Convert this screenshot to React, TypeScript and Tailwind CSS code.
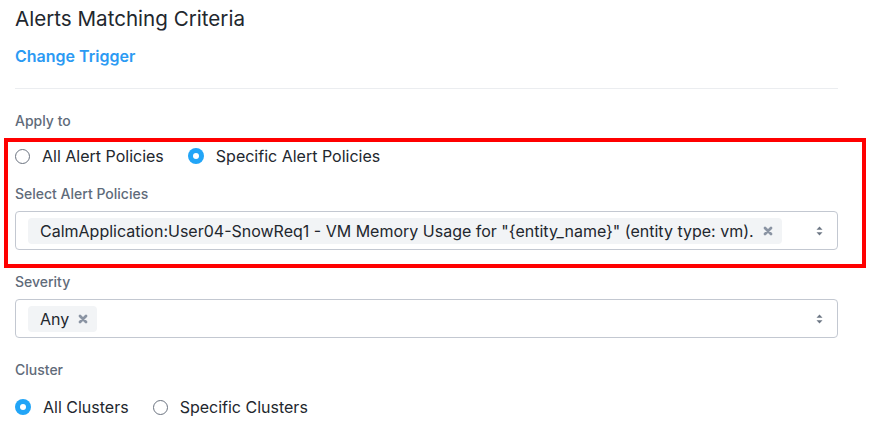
import React from 'react';

const FONT = { fontFamily: 'Inter, "Open Sans", Arial, sans-serif' };

const Radio: React.FC<{ checked?: boolean; label: string }> = ({ checked, label }) => (
  <label className="flex items-center gap-[12px] mr-[24px]">
    {checked ? (
      <span className="w-[16px] h-[16px] rounded-full bg-[#22a5f7] flex items-center justify-center">
        <span className="w-[6px] h-[6px] rounded-full bg-white" />
      </span>
    ) : (
      <span className="w-[15px] h-[15px] rounded-full border-[1.5px] border-[#6b7380] bg-white" />
    )}
    <span className="text-[16px] text-[#22272e]">{label}</span>
  </label>
);

const ChipX = () => (
  <svg width="10" height="10" viewBox="0 0 10 10" className="ml-[9px]">
    <path d="M2 2 L8 8 M8 2 L2 8" stroke="#8a94a3" strokeWidth="2.8" strokeLinecap="round" />
  </svg>
);

const Caret = () => (
  <svg width="7" height="10" viewBox="0 0 7 10">
    <path d="M3.5 0.5 L6.5 3.8 H0.5 Z" fill="#6d7785" />
    <path d="M3.5 9.5 L6.5 6.2 H0.5 Z" fill="#6d7785" />
  </svg>
);

const Select: React.FC<{ chip: string; className?: string }> = ({ chip, className }) => (
  <div className={`h-[39px] w-[823px] border border-[#c3c8d1] rounded-[4px] flex items-center pl-[12px] pr-[14px] bg-white ${className ?? ''}`}>
    <div className="flex-1">
      <span className="inline-flex items-center h-[26px] pl-[12px] pr-[9px] rounded-[4px] bg-[#f2f4f6] text-[16px] text-[#22272e]">
        {chip}
        <ChipX />
      </span>
    </div>
    <Caret />
  </div>
);

const FieldLabel: React.FC<{ children: React.ReactNode; className?: string }> = ({ children, className }) => (
  <div className={`h-[16px] leading-[16px] text-[14px] font-medium text-[#5f6b7a] ${className ?? ''}`}>{children}</div>
);

export default function App() {
  return (
    <div className="w-[876px] h-[441px] bg-white overflow-hidden" style={FONT}>
      <div className="pl-[15px] w-[838px]">
        <div className="h-[38px] flex items-center text-[20.6px] text-[#22272e]">Alerts Matching Criteria</div>
        <div className="h-[36px] flex items-center text-[16px] font-semibold text-[#2b9af3]">Change Trigger</div>
        <div className="h-[14px]" />
        <div className="border-t border-[#ebedf0]" />
        <FieldLabel className="mt-[24px]">Apply to</FieldLabel>
      </div>

      <div className="ml-[4px] w-[862px] mt-[9px] border-4 border-[#ff0000] pl-[7px] pr-[23px] pb-[14px]">
        <div className="h-[28px] flex items-center">
          <Radio label="All Alert Policies" />
          <Radio checked label="Specific Alert Policies" />
        </div>
        <FieldLabel className="mt-[16px]">Select Alert Policies</FieldLabel>
        <Select
          className="mt-[9px]"
          chip={'CalmApplication:User04-SnowReq1 - VM Memory Usage for "{entity_name}" (entity type: vm).'}
        />
      </div>

      <div className="pl-[15px] w-[838px]">
        <FieldLabel className="mt-[6px]">Severity</FieldLabel>
        <Select className="mt-[9px]" chip="Any" />
        <FieldLabel className="mt-[24px]">Cluster</FieldLabel>
        <div className="h-[22px] mt-[18px] flex items-center">
          <Radio checked label="All Clusters" />
          <Radio label="Specific Clusters" />
        </div>
      </div>
    </div>
  );
}
